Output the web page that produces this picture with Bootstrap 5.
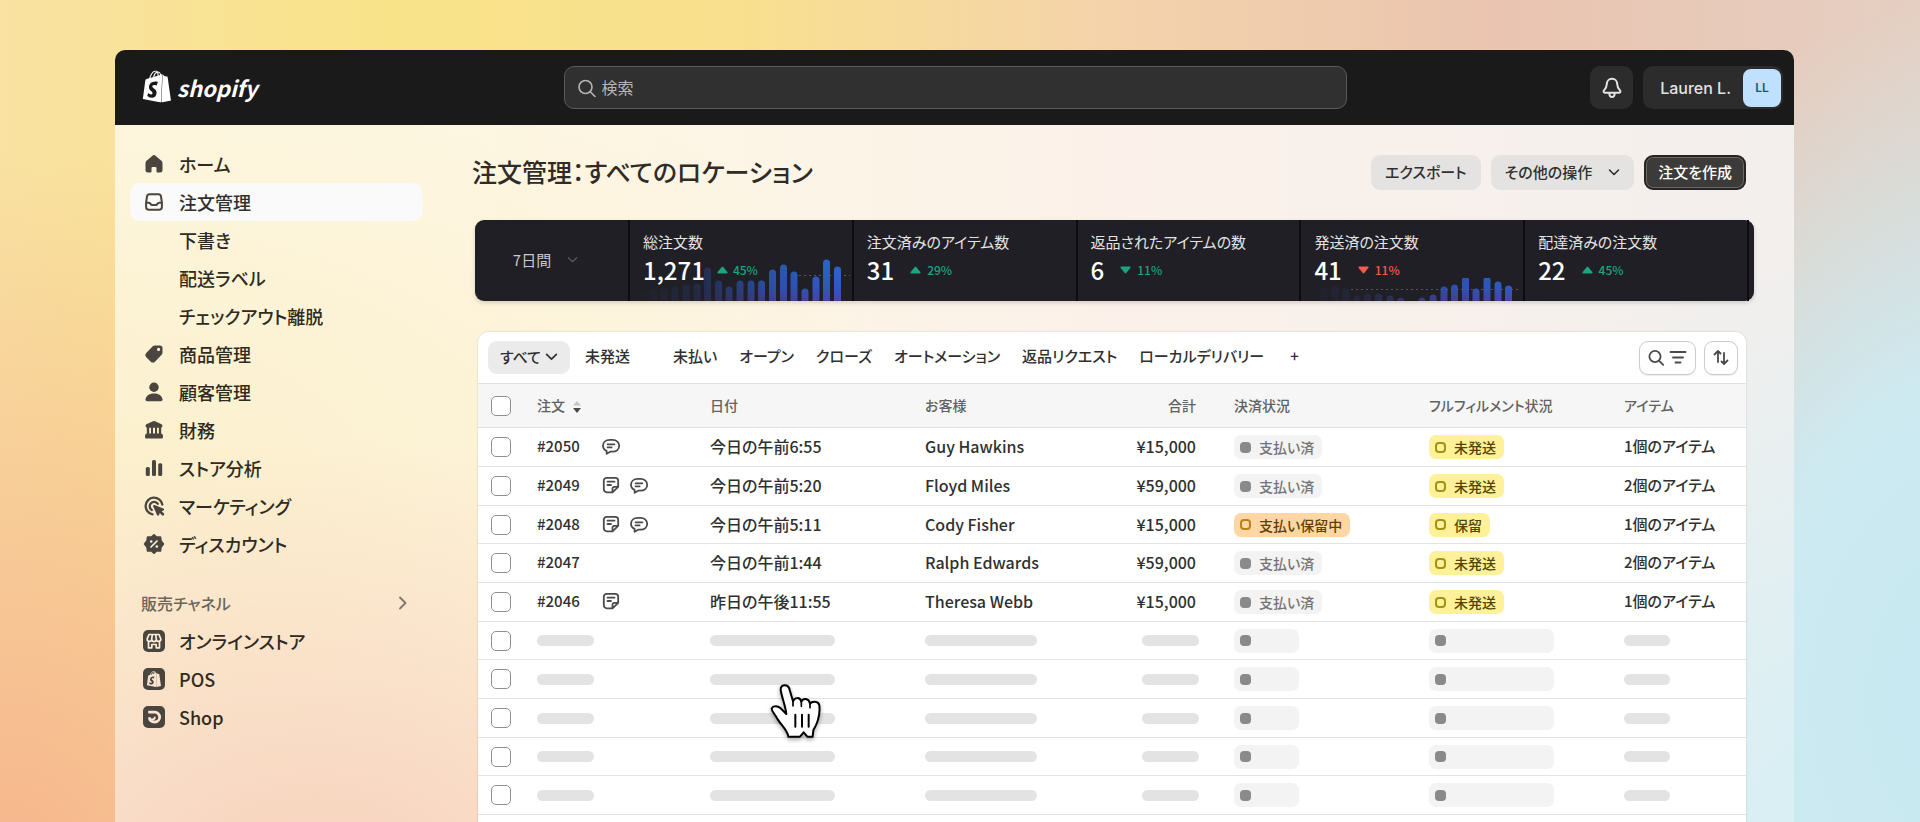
<!DOCTYPE html>
<html lang="ja">
<head>
<meta charset="utf-8">
<meta name="viewport" content="width=device-width, initial-scale=1">
<title>注文管理</title>
<link href="https://cdn.jsdelivr.net/npm/bootstrap@5.3.0/dist/css/bootstrap.min.css" rel="stylesheet">
<style>
  body {
    font-family: "Noto Sans CJK JP", sans-serif;
    font-feature-settings: "palt";
    font-weight: 500;
    font-size: 16px;
    line-height: 24px;
    color: #303030;
  }
  button, input { font-feature-settings: inherit; font-weight: 500; }
  .stage {
    height: 100vh;
    padding: 50px 126px 0 115px;
    background:
      radial-gradient(ellipse 34% 90% at 0% 108%, #f6b48c 0%, rgba(246,180,140,0) 100%),
      radial-gradient(ellipse 26% 85% at 103% 85%, #c6e8f1 0%, #cdeaf1 45%, rgba(205,234,241,0) 100%),
      linear-gradient(90deg, #f9e2a2 0%, #f9e389 20%, #f8e08e 38%, #f4d3ab 58%, #eac4b0 78%, #e5cfc2 100%);
  }
  .app-window {
    height: 100%;
    border-radius: 10px 10px 0 0;
    background:
      radial-gradient(ellipse 40% 60% at 12% 110%, #f7cfba 0%, rgba(247,207,186,0) 100%),
      radial-gradient(ellipse 30% 75% at 102% 100%, #d6eff5 0%, rgba(214,239,245,0) 100%),
      radial-gradient(ellipse 50% 60% at 0% 55%, #fcf0cd 0%, rgba(252,240,205,0) 100%),
      linear-gradient(90deg, #fdf8e2 0%, #fdf6e4 30%, #fbf1ea 60%, #f3efed 100%);
  }
  .topbar { height: 75px; padding: 0 11px 0 12px; background: #1a1a1a; }
  .top-slot { flex: 1 1 0; }
  .brand { margin: 3px 0 0 14px; gap: 4px; color: #fff; }
  .brand-name { font-size: 22px; line-height: 32px; font-weight: 700; font-style: italic; }
  .search-box {
    flex: 0 1 783px; height: 43px; padding: 0 12px 2px; gap: 5px;
    border: 1px solid #5a5a5a; border-radius: 10px; background: #303030; color: #b5b5b5;
  }
  .search-box input { color: #e3e3e3; font-weight: 400; outline: 0; }
  .search-box input::placeholder { color: #b5b5b5; opacity: 1; }
  .dark-btn { height: 43px; border: 0; border-radius: 10px; background: #2c2c2c; color: #e3e3e3; }
  .bell-btn { width: 43px; padding: 0; margin-right: 10px; }
  .user-btn { padding: 0 2px 0 17px; gap: 12px; font-family: Inter, sans-serif; font-size: 16px; }
  .avatar {
    width: 38px; height: 38px; border-radius: 8px; background: #c0e0ff;
    color: #0b5a76; font-size: 12px; font-weight: 600;
  }
  .sidebar { flex: 0 0 357px; padding: 20px 49px 0 15px; }
  .side-link {
    height: 38px; padding: 0 14px 0 13px; gap: 14px; border-radius: 10px;
    font-size: 18px; color: #302b22; text-decoration: none;
  }
  .side-link svg { flex: none; color: #4a453e; }
  .side-link .cutout { color: #fbe6d4; }
  .side-link.current { background: #fafafb; color: #303030; }
  .side-link.sub { padding-left: 49px; }
  .side-heading { height: 38px; margin-top: 21px; padding: 0 14px 0 11px; font-size: 16px; color: #6b655b; }
  .main-col { padding: 30px 40px 0 0; min-width: 0; }
  .title-row { margin-right: 8px; gap: 10px; }
  .page-title { font-size: 25px; line-height: 32px; padding-bottom: 3px; font-weight: 500; color: #302b26; }
  .action-btn { height: 35px; border: 0; border-radius: 9px; padding: 0 14px 2px; font-size: 15px; background: #e5e3e1; color: #303030; }
  .primary-btn { padding: 0 12px 2px; background: #3c3b39; color: #fff; border: 2px solid #262524; box-shadow: inset 0 0 0 1px #6a6866; }
  .metrics { margin: 30px 0 31px 3px; height: 81px; border-radius: 9px; background: #1f1f25; color: #e3e3e3; box-shadow: 0 2px 4px rgba(0,0,0,.15); padding-right: 5px; }
  .range-btn { flex: 0 0 153px; border: 0; background: transparent; color: #c9c9cc; font-size: 15px; font-weight: 400; padding: 0 12px 2px 0; }
  .metric { flex: 1 1 0; padding: 11px 12px 0 13px; border-left: 2px solid #0c0c10; position: relative; }
  .metric:last-child { border-right: 2px solid #0c0c10; }
  .metric-label { font-size: 15px; line-height: 22px; font-weight: 400; }
  .metric-value { font-size: 24px; line-height: 34px; color: #fff; }
  .metric-trend { font-size: 12px; gap: 6px; margin-left: 16px; }
  .metric-trend.near { margin-left: 12px; gap: 5px; }
  .up { color: #1ea37f; }
  .down { color: #ef5b4c; }
  .metric-body { position: relative; }
  .spark { position: absolute; right: 0; bottom: 0; }
  .orders { margin: 0 8px 0 6px; border-radius: 10px 10px 0 0; background: #fff; box-shadow: 0 0 2px rgba(0,0,0,.2); }
  .tabs { height: 51px; padding: 0 8px 0 10px; }
  .tab-btn { border: 0; background: transparent; padding: 0 11px 3px; height: 33px; border-radius: 9px; font-size: 15px; color: #303030; white-space: nowrap; }
  .tab-btn.current { background: #ebebeb; padding: 0 12px 2px; margin-right: 4px; }
  .tab-btn.spaced { margin-right: 21px; }
  .tool-btn { height: 34px; border: 1px solid #ccc; border-radius: 9px; background: #fff; color: #4a4a4a; box-shadow: 0 1px 1px rgba(0,0,0,.08); }
  .order-table { width: 100%; table-layout: fixed; }
  .order-table th, .order-table td { padding: 0; white-space: nowrap; vertical-align: middle; line-height: 24px; }
  .order-table th { height: 44px; padding-bottom: 2px; background: #f6f6f6; border-top: 1px solid #e0e0e0; border-bottom: 1px solid #e0e0e0; font-size: 14px; font-weight: 500; color: #616161; }
  .order-table td { height: 39px; border-bottom: 1px solid #e3e3e3; }
  .order-table tbody tr:nth-child(3n) td { height: 38px; }
  .order-table tbody tr:nth-child(-n+5) td:not(.pick) { padding-bottom: 2px; }
  .order-table .pick { padding-left: 13px; padding-bottom: 0; }
  .order-table .pay { padding-left: 35px; }
  .order-table .sum { text-align: right; padding-right: 3px; }
  .order-table .sum.empty { padding-right: 0; }
  .pick .form-check-input { display: block; width: 20px; height: 20px; margin: 0; border: 1px solid #8f8f8f; border-radius: 5px; }
  .order-no { width: 64px; font-size: 15px; }
  .items { font-size: 15px; }
  .pill { height: 24px; padding: 0 8px 0 6px; gap: 8px; border-radius: 7px; background: #f3f3f3; color: #757575; font-size: 14px; line-height: 24px; vertical-align: middle; }
  .pill::before { content: ""; width: 11px; height: 11px; border-radius: 4px; background: #8a8a8a; }
  .pill.wait { background: #fff09a; color: #4f4700; }
  .pill.wait::before { background: transparent; border: 2px solid #a39410; }
  .pill.hold { background: #ffd6a4; color: #5e4200; }
  .pill.hold::before { background: transparent; border: 2px solid #b98417; }
  .pill.blank-s { width: 65px; }
  .pill.blank-l { width: 125px; }
  .bar { display: block; height: 11px; border-radius: 6px; background: #e3e3e3; }
  .w-xs { width: 46px; }
  .w-s { width: 57px; }
  .w-m { width: 112px; }
  .w-l { width: 125px; }
  .hand { position: absolute; left: 60px; top: 23px; z-index: 2; filter: drop-shadow(0 2px 2px rgba(0,0,0,.35)); }
</style>
</head>
<body>
<svg class="d-none" xmlns="http://www.w3.org/2000/svg">
  <symbol id="i-bag" viewBox="0 0 24 24"><path fill="currentColor" d="M15.337 23.979l7.216-1.561s-2.604-17.613-2.625-17.73c-.018-.116-.114-.192-.211-.192s-1.929-.136-1.929-.136-1.275-1.274-1.439-1.411c-.045-.037-.075-.057-.121-.074l-.914 21.104h.023zM11.71 11.305s-.81-.424-1.774-.424c-1.447 0-1.504.906-1.504 1.141 0 1.232 3.24 1.715 3.24 4.629 0 2.295-1.44 3.76-3.406 3.76-2.354 0-3.54-1.465-3.54-1.465l.646-2.086s1.245 1.066 2.28 1.066c.675 0 .975-.545.975-.932 0-1.619-2.654-1.694-2.654-4.359-.034-2.237 1.571-4.416 4.827-4.416 1.257 0 1.875.361 1.875.361l-.945 2.715-.02.01zM11.17.83c.136 0 .271.038.405.135-.984.465-2.064 1.639-2.508 3.992-.656.213-1.293.405-1.889.578C7.697 3.75 8.951.84 11.17.84V.83zm1.235 2.949v.135c-.754.232-1.583.484-2.394.736.466-1.777 1.333-2.645 2.085-2.971.193.501.309 1.176.309 2.1zm.539-2.234c.694.074 1.141.867 1.429 1.755-.349.114-.735.231-1.158.366v-.252c0-.752-.096-1.371-.271-1.871v.002zm2.992 1.289c-.02 0-.06.021-.078.021s-.289.075-.714.21c-.423-1.233-1.176-2.37-2.508-2.37h-.115C12.135.209 11.669 0 11.265 0 8.159 0 6.675 3.877 6.21 5.846c-1.194.365-2.063.636-2.16.674-.675.213-.694.232-.772.87-.075.462-1.83 14.063-1.83 14.063L15.009 24l.927-21.166z"/></symbol>
  <symbol id="i-chat" viewBox="0 0 20 20"><path fill="none" stroke="currentColor" stroke-width="1.8" stroke-linejoin="round" stroke-linecap="round" d="M5.600 14.800v3l3.600-2.100h2.200c4.200 0 6.800-2.500 6.800-5.900s-2.600-5.900-6.800-5.900H8.800C4.600 3.900 2 6.400 2 9.700c0 2.300 1.400 4.200 3.600 5.100zM6.600 8.300h6.800M6.600 11.400h4"/></symbol>
  <symbol id="i-note" viewBox="0 0 20 20"><path fill="none" stroke="currentColor" stroke-width="1.800" stroke-linejoin="round" stroke-linecap="round" d="M11.500 17.300H5.800a3 3 0 0 1-3-3V5.800a3 3 0 0 1 3-3h8.400a3 3 0 0 1 3 3v6zM17.200 11.800h-3.700a2 2 0 0 0-2 2v3.500zM6.500 6.700h7M6.500 10h3.500"/></symbol>
  <symbol id="i-down" viewBox="0 0 12 12"><path fill="none" stroke="currentColor" stroke-width="1.600" stroke-linecap="round" stroke-linejoin="round" d="M1.500 4l4.500 4.500L10.500 4"/></symbol>
  <symbol id="i-tri" viewBox="0 0 12 8"><path fill="currentColor" d="M5.200.7a1.100 1.100 0 0 1 1.600 0l4.500 5.500c.5.700.2 1.500-.7 1.500H1.400c-.9 0-1.200-.8-.7-1.500z"/></symbol>
</svg>

<div class="stage overflow-hidden">
<div class="app-window overflow-hidden d-flex flex-column">
  <header class="topbar d-flex align-items-center flex-shrink-0">
    <div class="top-slot">
      <div class="brand d-inline-flex align-items-center">
        <svg width="32" height="33" viewBox="0 0 24 24"><use href="#i-bag"/></svg>
        <span class="brand-name">shopify</span>
      </div>
    </div>
    <label class="search-box d-flex align-items-center">
      <svg width="20" height="20" viewBox="0 0 20 20" fill="none" stroke="currentColor" stroke-width="1.600" stroke-linecap="round"><circle cx="8.500" cy="10" r="6.500"/><path d="M13.500 15l4.500 4.500"/></svg>
      <input class="border-0 bg-transparent p-0 flex-fill shadow-none" type="search" placeholder="検索" aria-label="検索">
    </label>
    <div class="top-slot d-flex justify-content-end">
      <button class="dark-btn bell-btn d-flex align-items-center justify-content-center" type="button" aria-label="通知">
        <svg width="22" height="22" viewBox="0 0 22 22" fill="none" stroke="currentColor" stroke-width="2" stroke-linejoin="round"><path d="M11 1.800c-3.200 0-5.200 2.300-5.200 5.300 0 3-1 4.500-2.800 6.300-.9.900-.5 2.300.9 2.300h14.200c1.400 0 1.800-1.400.9-2.300-1.800-1.800-2.800-3.300-2.800-6.300 0-3-2-5.300-5.200-5.300zM8.300 16c0 2.700 1.200 4 2.700 4s2.700-1.300 2.700-4"/></svg>
      </button>
      <button class="dark-btn user-btn d-flex align-items-center" type="button">Lauren L. <span class="avatar d-flex align-items-center justify-content-center">LL</span></button>
    </div>
  </header>

  <div class="d-flex flex-fill">
    <nav class="sidebar">
      <a class="side-link d-flex align-items-center" href="#"><svg width="22" height="22" viewBox="0 0 22 22"><path fill="currentColor" d="M9.200 2.900a2.700 2.700 0 0 1 3.600 0l5.300 4.700c.9.800 1.400 1.700 1.400 2.900V17a2.500 2.500 0 0 1-2.500 2.500h-2.500a1 1 0 0 1-1-1V15a1 1 0 0 0-1-1h-3a1 1 0 0 0-1 1v3.500a1 1 0 0 1-1 1H5A2.500 2.500 0 0 1 2.500 17v-6.500c0-1.200.5-2.100 1.400-2.900z"/></svg>ホーム</a>
      <a class="side-link current d-flex align-items-center" href="#" aria-current="page"><svg width="22" height="22" viewBox="0 0 22 22" fill="none" stroke="currentColor" stroke-width="2" stroke-linejoin="round"><path d="M6.500 3.300h9c1.300 0 2.300.9 2.500 2.200l.9 6V16a2.800 2.800 0 0 1-2.800 2.800H5.900A2.800 2.800 0 0 1 3.100 16v-4.500l.9-6c.2-1.300 1.200-2.200 2.500-2.200zM3.200 11.700h2.600c.8 0 1.400.4 1.700 1 .4.800 1 1.300 1.800 1.300h3.400c.8 0 1.400-.5 1.800-1.300.3-.6.9-1 1.700-1h2.600"/></svg>注文管理</a>
      <a class="side-link sub d-flex align-items-center" href="#">下書き</a>
      <a class="side-link sub d-flex align-items-center" href="#">配送ラベル</a>
      <a class="side-link sub d-flex align-items-center" href="#">チェックアウト離脱</a>
      <a class="side-link d-flex align-items-center" href="#"><svg width="22" height="22" viewBox="0 0 22 22"><path fill="currentColor" fill-rule="evenodd" d="M11.800 2.500h5A2.700 2.700 0 0 1 19.500 5.200v4.300c0 1-.4 1.900-1.100 2.600l-6.200 6.300a3.300 3.300 0 0 1-4.700 0l-4-4a3.300 3.300 0 0 1 0-4.700l6-6.200c.6-.7 1.400-1 2.300-1zM15.600 8a1.600 1.600 0 1 0 0-3.200 1.600 1.600 0 0 0 0 3.200z"/></svg>商品管理</a>
      <a class="side-link d-flex align-items-center" href="#"><svg width="22" height="22" viewBox="0 0 22 22" fill="currentColor"><circle cx="11" cy="6.200" r="4.700"/><path d="M2.500 18c1-3.900 4.400-5.600 8.500-5.600s7.500 1.700 8.500 5.600c.3 1.300-.5 2.200-1.600 2.200H4.100c-1.100 0-1.900-.9-1.600-2.200z"/></svg>顧客管理</a>
      <a class="side-link d-flex align-items-center" href="#"><svg width="22" height="22" viewBox="0 0 22 22" fill="currentColor"><path d="M10 2.200a2.300 2.300 0 0 1 2 0l6.600 3.100c1.200.6 1.200 3.200-.4 3.400H3.800C2.200 8.500 2.200 5.900 3.400 5.300zM3.800 8h2.400v7H3.800zM8 8h2v7H8zM12 8h2v7h-2zM15.800 8h2.400v7h-2.400zM4 14.500h14c1.200 0 2 1.300 2 2.700s-.4 2.300-1.300 2.300H3.300c-.9 0-1.300-.9-1.300-2.300s.8-2.700 2-2.700z"/></svg>財務</a>
      <a class="side-link d-flex align-items-center" href="#"><svg width="22" height="22" viewBox="0 0 22 22" fill="currentColor"><rect x="2.800" y="10" width="4" height="9" rx="1.500"/><rect x="9" y="3" width="4" height="16" rx="1.500"/><rect x="15.200" y="6.300" width="4" height="12.700" rx="1.500"/></svg>ストア分析</a>
      <a class="side-link d-flex align-items-center" href="#"><svg width="22" height="22" viewBox="0 0 22 22" fill="none" stroke="currentColor" stroke-width="2.300" stroke-linecap="round"><path d="M9.500 19.300A8.400 8.400 0 1 1 19.300 9.500M8.800 15a4.400 4.400 0 1 1 5.900-6.300"/><path fill="currentColor" stroke="none" d="M10.200 11.400c-.3-.9.400-1.600 1.300-1.300l8.900 3.300c1 .4 1 1.700 0 2.100l-1.700.7 2.100 2.100a1.300 1.300 0 0 1-1.900 1.900l-2.100-2.100-.7 1.800c-.4 1-1.700 1-2.100 0z"/></svg>マーケティング</a>
      <a class="side-link d-flex align-items-center" href="#"><svg width="22" height="22" viewBox="0 0 22 22"><path fill="currentColor" stroke="currentColor" stroke-width="2" stroke-linejoin="round" d="M11 2l2.400 2.200h3.900l.5 3.600L20.300 11l-2.500 3.200-.5 3.600h-3.900L11 20l-2.400-2.200H4.700l-.5-3.600L1.700 11l2.500-3.200.5-3.600h3.900z"/><path stroke="#fbf0d8" stroke-width="1.700" stroke-linecap="round" d="M8 14l6-6"/><circle cx="8.200" cy="8.500" r="1.300" fill="#fbf0d8"/><circle cx="13.800" cy="13.500" r="1.300" fill="#fbf0d8"/></svg>ディスカウント</a>
      <div class="side-heading d-flex align-items-center justify-content-between">販売チャネル
        <svg width="14" height="14" viewBox="0 0 14 14" fill="none" stroke="#7d766c" stroke-width="1.800" stroke-linecap="round" stroke-linejoin="round"><path d="M5 1.500L10.500 7 5 12.500"/></svg>
      </div>
      <a class="side-link d-flex align-items-center" href="#"><svg width="22" height="22" viewBox="0 0 22 22"><rect width="22" height="22" rx="5" fill="currentColor"/><path fill="none" stroke="#fbecd8" stroke-width="1.700" stroke-linejoin="round" d="M6 4.500h10l1.800 4.300a2.200 2.200 0 0 1-4.500.500 2.300 2.300 0 0 1-4.600 0 2.200 2.200 0 0 1-4.500-.5zM5.500 11v6.800h3.300v-3.300h4.400v3.300h3.300V11M9.300 4.500l-.6 4.500M12.700 4.500l.6 4.500"/></svg>オンラインストア</a>
      <a class="side-link d-flex align-items-center" href="#"><svg width="22" height="22" viewBox="0 0 22 22"><rect width="22" height="22" rx="5" fill="currentColor"/><use class="cutout" href="#i-bag" x="3" y="3" width="16" height="16"/></svg>POS</a>
      <a class="side-link d-flex align-items-center" href="#"><svg width="22" height="22" viewBox="0 0 22 22"><rect width="22" height="22" rx="5" fill="currentColor"/><path fill="none" stroke="#fbe6d4" stroke-width="2.800" stroke-linecap="butt" stroke-linejoin="round" d="M5.200 6.200h6.600a4.900 4.900 0 0 1 0 9.800c-3.600 0-5.400-2-5.400-4.800"/><path fill="none" stroke="#fbe6d4" stroke-width="2" stroke-linecap="round" d="M7.500 13.200c2 .6 4.300.1 4.300-1.800"/></svg>Shop</a>
    </nav>

    <main class="main-col flex-fill">
      <div class="title-row d-flex align-items-center">
        <h1 class="page-title m-0 me-auto">注文管理：すべてのロケーション</h1>
        <button class="action-btn" type="button">エクスポート</button>
        <button class="action-btn d-flex align-items-center" type="button">その他の操作<svg class="ms-3" width="12" height="12"><use href="#i-down"/></svg></button>
        <button class="action-btn primary-btn" type="button">注文を作成</button>
      </div>

      <section class="metrics d-flex">
        <button class="range-btn d-flex align-items-center justify-content-center gap-3" type="button">7日間<svg width="11" height="11" color="#55555b"><use href="#i-down"/></svg></button>
        <div class="metric">
          <svg class="spark" width="222" height="46" viewBox="0 0 222 46">
            <defs>
              <linearGradient id="blue" x1="0" y1="0" x2="0" y2="46" gradientUnits="userSpaceOnUse"><stop offset="0" stop-color="#2a6cd4"/><stop offset=".7" stop-color="#305cc8"/><stop offset="1" stop-color="#4c46ac"/></linearGradient>
              <linearGradient id="fadeIn" x1="0" x2="1"><stop offset="0" stop-color="#fff" stop-opacity="0"/><stop offset=".3" stop-color="#fff" stop-opacity=".2"/><stop offset=".65" stop-color="#fff" stop-opacity=".8"/><stop offset="1" stop-color="#fff"/></linearGradient>
              <mask id="fade"><rect width="222" height="46" fill="url(#fadeIn)"/></mask>
            </defs>
            <path d="M164 20.500h56" stroke="#55555c" stroke-width="1" stroke-dasharray="2 3"/>
            <g mask="url(#fade)"><path stroke="url(#blue)" stroke-width="7" stroke-linecap="round" d="M12.500 39V50M23.300 38V50M34 37V50M45 35V50M56 33V50M67 32V50M77.500 16V50M88.500 29V50M99 35V50M110 29V50M121 29V50M131.500 29V50M142.500 18V50M153.500 13V50M164 20V50M175 37V50M186 25V50M196.500 8V50M207.500 15V50"/></g>
          </svg>
          <div class="metric-body">
            <div class="metric-label">総注文数</div>
            <div class="d-flex align-items-center"><span class="metric-value">1,271</span><span class="metric-trend near up d-flex align-items-center"><svg width="11" height="8"><use href="#i-tri"/></svg>45%</span></div>
          </div>
        </div>
        <div class="metric">
          <div class="metric-label">注文済みのアイテム数</div>
          <div class="d-flex align-items-center"><span class="metric-value">31</span><span class="metric-trend up d-flex align-items-center"><svg width="11" height="8"><use href="#i-tri"/></svg>29%</span></div>
        </div>
        <div class="metric">
          <div class="metric-label">返品されたアイテムの数</div>
          <div class="d-flex align-items-center"><span class="metric-value">6</span><span class="metric-trend up d-flex align-items-center"><svg width="11" height="8" viewBox="0 0 12 8"><path fill="currentColor" d="M5.200 7.300a1.100 1.100 0 0 0 1.600 0l4.500-5.500c.5-.7.2-1.500-.7-1.500H1.400c-.9 0-1.200.8-.7 1.500z"/></svg>11%</span></div>
        </div>
        <div class="metric">
          <svg class="spark" width="222" height="46" viewBox="0 0 222 46">
            <path d="M50 34.500h170" stroke="#55555c" stroke-width="1" stroke-dasharray="2 3"/>
            <g mask="url(#fade)"><path stroke="url(#blue)" stroke-width="7" stroke-linecap="round" d="M12.500 41V50M23 36V50M34 34V50M45 37V50M56 44V50M66.500 42V50M77.500 42V50M89 44V50M99.500 46V50M121 46V50M132 43V50M143 35V50M153.500 33V50M164.500 25V50M175 37V50M186 25V50M197 30V50M207.500 34V50"/></g>
          </svg>
          <div class="metric-body">
            <div class="metric-label">発送済の注文数</div>
            <div class="d-flex align-items-center"><span class="metric-value">41</span><span class="metric-trend down d-flex align-items-center"><svg width="11" height="8" viewBox="0 0 12 8"><path fill="currentColor" d="M5.200 7.300a1.100 1.100 0 0 0 1.600 0l4.500-5.500c.5-.7.2-1.500-.7-1.500H1.400c-.9 0-1.200.8-.7 1.500z"/></svg>11%</span></div>
          </div>
        </div>
        <div class="metric">
          <div class="metric-label">配達済みの注文数</div>
          <div class="d-flex align-items-center"><span class="metric-value">22</span><span class="metric-trend up d-flex align-items-center"><svg width="11" height="8"><use href="#i-tri"/></svg>45%</span></div>
        </div>
      </section>

      <section class="orders">
        <div class="tabs d-flex align-items-center">
          <button class="tab-btn current d-flex align-items-center gap-1" type="button">すべて<svg width="13" height="13"><use href="#i-down"/></svg></button>
          <button class="tab-btn spaced" type="button">未発送</button>
          <button class="tab-btn" type="button">未払い</button>
          <button class="tab-btn" type="button">オープン</button>
          <button class="tab-btn" type="button">クローズ</button>
          <button class="tab-btn" type="button">オートメーション</button>
          <button class="tab-btn" type="button">返品リクエスト</button>
          <button class="tab-btn" type="button">ローカルデリバリー</button>
          <button class="tab-btn ms-1 me-auto" type="button" aria-label="ビューを追加">+</button>
          <button class="tool-btn d-flex align-items-center gap-1 px-2 me-2" type="button" aria-label="検索と絞り込み">
            <svg width="17" height="17" viewBox="0 0 17 17" fill="none" stroke="currentColor" stroke-width="1.800" stroke-linecap="round"><circle cx="7" cy="7.500" r="5.600"/><path d="M11.200 11.800l4 4"/></svg>
            <svg width="18" height="17" viewBox="0 0 18 17" fill="none" stroke="currentColor" stroke-width="1.800" stroke-linecap="round"><path d="M1.500 3h15M4 8.500h10M6.500 13.500h5"/></svg>
          </button>
          <button class="tool-btn d-flex align-items-center px-2" type="button" aria-label="並べ替え">
            <svg width="16" height="17" viewBox="0 0 16 17" fill="none" stroke="currentColor" stroke-width="1.800" stroke-linecap="round" stroke-linejoin="round"><path d="M5 13V2M1.500 5.500L5 2l2.500 2.500M11 4v11M8.500 12.500L11 15l3.500-3.500"/></svg>
          </button>
        </div>
        <table class="order-table">
          <colgroup><col style="width:59px"><col style="width:173px"><col style="width:215px"><col style="width:150px"><col style="width:124px"><col style="width:230px"><col style="width:195px"><col style="width:122px"></colgroup>
          <thead>
            <tr>
              <th class="pick"><input class="form-check-input" type="checkbox" aria-label="すべての注文を選択"></th>
              <th>注文<svg class="ms-2" width="8" height="12" viewBox="0 0 8 12"><path fill="#c4c4c4" d="M4 0l4 4.500H0z"/><path fill="#4a4a4a" d="M4 12l4-5H0z"/></svg></th>
              <th>日付</th><th>お客様</th><th class="sum">合計</th><th class="pay">決済状況</th><th>フルフィルメント状況</th><th>アイテム</th>
            </tr>
          </thead>
          <tbody>
            <tr>
              <td class="pick"><input class="form-check-input" type="checkbox" aria-label="#2050"></td>
              <td><div class="d-flex align-items-center"><span class="order-no">#2050</span><svg width="20" height="20" color="#4a4a4a"><use href="#i-chat"/></svg></div></td>
              <td>今日の午前6:55</td><td>Guy Hawkins</td><td class="sum">¥15,000</td>
              <td class="pay"><span class="pill d-inline-flex align-items-center">支払い済</span></td><td><span class="pill wait d-inline-flex align-items-center">未発送</span></td><td class="items">1個のアイテム</td>
            </tr>
            <tr>
              <td class="pick"><input class="form-check-input" type="checkbox" aria-label="#2049"></td>
              <td><div class="d-flex align-items-center"><span class="order-no">#2049</span><svg class="me-2" width="20" height="20" color="#4a4a4a"><use href="#i-note"/></svg><svg width="20" height="20" color="#4a4a4a"><use href="#i-chat"/></svg></div></td>
              <td>今日の午前5:20</td><td>Floyd Miles</td><td class="sum">¥59,000</td>
              <td class="pay"><span class="pill d-inline-flex align-items-center">支払い済</span></td><td><span class="pill wait d-inline-flex align-items-center">未発送</span></td><td class="items">2個のアイテム</td>
            </tr>
            <tr>
              <td class="pick"><input class="form-check-input" type="checkbox" aria-label="#2048"></td>
              <td><div class="d-flex align-items-center"><span class="order-no">#2048</span><svg class="me-2" width="20" height="20" color="#4a4a4a"><use href="#i-note"/></svg><svg width="20" height="20" color="#4a4a4a"><use href="#i-chat"/></svg></div></td>
              <td>今日の午前5:11</td><td>Cody Fisher</td><td class="sum">¥15,000</td>
              <td class="pay"><span class="pill hold d-inline-flex align-items-center">支払い保留中</span></td><td><span class="pill wait d-inline-flex align-items-center">保留</span></td><td class="items">1個のアイテム</td>
            </tr>
            <tr>
              <td class="pick"><input class="form-check-input" type="checkbox" aria-label="#2047"></td>
              <td><div class="d-flex align-items-center"><span class="order-no">#2047</span></div></td>
              <td>今日の午前1:44</td><td>Ralph Edwards</td><td class="sum">¥59,000</td>
              <td class="pay"><span class="pill d-inline-flex align-items-center">支払い済</span></td><td><span class="pill wait d-inline-flex align-items-center">未発送</span></td><td class="items">2個のアイテム</td>
            </tr>
            <tr>
              <td class="pick"><input class="form-check-input" type="checkbox" aria-label="#2046"></td>
              <td><div class="d-flex align-items-center"><span class="order-no">#2046</span><svg width="20" height="20" color="#4a4a4a"><use href="#i-note"/></svg></div></td>
              <td>昨日の午後11:55</td><td>Theresa Webb</td><td class="sum">¥15,000</td>
              <td class="pay"><span class="pill d-inline-flex align-items-center">支払い済</span></td><td><span class="pill wait d-inline-flex align-items-center">未発送</span></td><td class="items">1個のアイテム</td>
            </tr>
            <tr>
              <td class="pick"><input class="form-check-input" type="checkbox" aria-label="読み込み中"></td>
              <td><span class="bar w-s"></span></td><td><span class="bar w-l"></span></td><td><span class="bar w-m"></span></td><td class="sum empty"><span class="bar w-s ms-auto"></span></td>
              <td class="pay"><span class="pill blank-s d-flex align-items-center"></span></td><td><span class="pill blank-l d-flex align-items-center"></span></td><td><span class="bar w-xs"></span></td>
            </tr>
            <tr>
              <td class="pick"><input class="form-check-input" type="checkbox" aria-label="読み込み中"></td>
              <td><span class="bar w-s"></span></td>
              <td class="position-relative"><span class="bar w-l"></span>
                <svg class="hand" width="52" height="56" viewBox="898 905 156 168" fill="#fff" stroke="#000" stroke-width="6" stroke-linejoin="round" stroke-linecap="round"><path d="M953 1066C951 1046 926 1026 917 1007C909 994 902 988 903 981C907 973 921 973 930 981L947 998C945 975 931 940 930 925C930 908 951 907 956 922L967 960C971 948 988 946 992 961C998 948 1015 951 1018 967C1024 959 1043 958 1046 972C1049 1000 1041 1025 1028 1047L1026 1066H1010L999 1053L988 1066Z"/><path d="M967 958v16M992 961v14M1018 967v12" stroke-width="5"/><path d="M974 1000v36M994 1000v36M1014 1000v36"/></svg>
              </td>
              <td><span class="bar w-m"></span></td><td class="sum empty"><span class="bar w-s ms-auto"></span></td>
              <td class="pay"><span class="pill blank-s d-flex align-items-center"></span></td><td><span class="pill blank-l d-flex align-items-center"></span></td><td><span class="bar w-xs"></span></td>
            </tr>
            <tr>
              <td class="pick"><input class="form-check-input" type="checkbox" aria-label="読み込み中"></td>
              <td><span class="bar w-s"></span></td><td><span class="bar w-l"></span></td><td><span class="bar w-m"></span></td><td class="sum empty"><span class="bar w-s ms-auto"></span></td>
              <td class="pay"><span class="pill blank-s d-flex align-items-center"></span></td><td><span class="pill blank-l d-flex align-items-center"></span></td><td><span class="bar w-xs"></span></td>
            </tr>
            <tr>
              <td class="pick"><input class="form-check-input" type="checkbox" aria-label="読み込み中"></td>
              <td><span class="bar w-s"></span></td><td><span class="bar w-l"></span></td><td><span class="bar w-m"></span></td><td class="sum empty"><span class="bar w-s ms-auto"></span></td>
              <td class="pay"><span class="pill blank-s d-flex align-items-center"></span></td><td><span class="pill blank-l d-flex align-items-center"></span></td><td><span class="bar w-xs"></span></td>
            </tr>
            <tr>
              <td class="pick"><input class="form-check-input" type="checkbox" aria-label="読み込み中"></td>
              <td><span class="bar w-s"></span></td><td><span class="bar w-l"></span></td><td><span class="bar w-m"></span></td><td class="sum empty"><span class="bar w-s ms-auto"></span></td>
              <td class="pay"><span class="pill blank-s d-flex align-items-center"></span></td><td><span class="pill blank-l d-flex align-items-center"></span></td><td><span class="bar w-xs"></span></td>
            </tr>
            <tr><td colspan="8"></td></tr>
          </tbody>
        </table>
      </section>
    </main>
  </div>
</div>
</div>
<script src="https://cdn.jsdelivr.net/npm/bootstrap@5.3.0/dist/js/bootstrap.bundle.min.js"></script>
</body>
</html>
